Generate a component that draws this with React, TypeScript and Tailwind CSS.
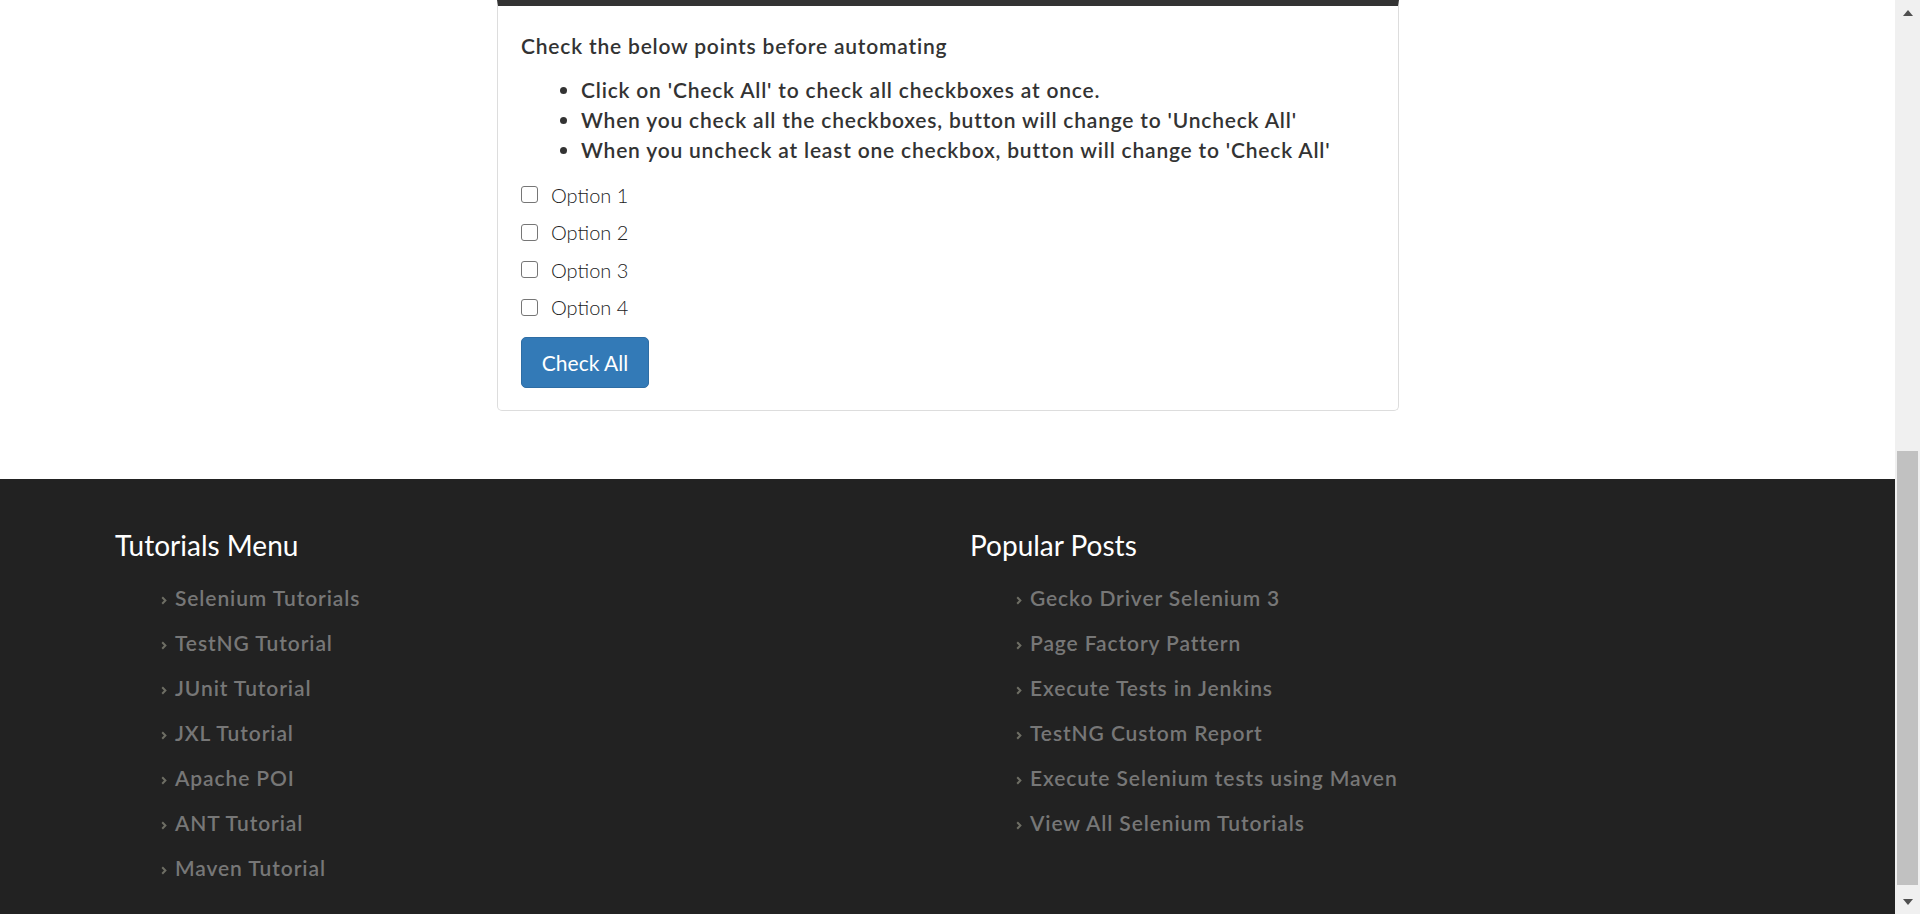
import React from "react";

const bullets = [
  "Click on 'Check All' to check all checkboxes at once.",
  "When you check all the checkboxes, button will change to 'Uncheck All'",
  "When you uncheck at least one checkbox, button will change to 'Check All'",
];

const tutorials = [
  "Selenium Tutorials",
  "TestNG Tutorial",
  "JUnit Tutorial",
  "JXL Tutorial",
  "Apache POI",
  "ANT Tutorial",
  "Maven Tutorial",
];

const posts = [
  "Gecko Driver Selenium 3",
  "Page Factory Pattern",
  "Execute Tests in Jenkins",
  "TestNG Custom Report",
  "Execute Selenium tests using Maven",
  "View All Selenium Tutorials",
];

function FooterCol({ title, items }: { title: string; items: string[] }) {
  return (
    <div>
      <h3 className="text-[28px] leading-[36px] font-normal text-white">{title}</h3>
      <ul className="mt-[12px] pl-[46px]">
        {items.map((t) => (
          <li key={t} className="flex items-center h-[45px]">
            <svg width="6" height="9" viewBox="0 0 6 9" className="mr-[8px] mt-[5px] shrink-0">
              <path d="M1.2 1.2 L4.4 4.5 L1.2 7.8" fill="none" stroke="#6e6e64" strokeWidth="2" />
            </svg>
            <span className="text-[#777] font-semibold text-[21px] tracking-[0.9px]">{t}</span>
          </li>
        ))}
      </ul>
    </div>
  );
}

export default function App() {
  return (
    <div
      className="flex h-[914px] w-[1920px] overflow-hidden bg-white"
      style={{ fontFamily: "Lato, 'Open Sans', sans-serif" }}
    >
      <div className="flex flex-col w-[1895px]">
        <div className="h-[479px] shrink-0">
          <div className="ml-[497px] w-[902px] border border-[#ddd] border-t-[6px] border-t-[#333] rounded-b-[5px] px-[23px] pt-[25px] pb-[22px]">
            <p className="text-[21px] leading-[30px] font-semibold tracking-[0.8px] text-[#333]">
              Check the below points before automating
            </p>
            <ul className="mt-[14px] pl-[60px] list-disc text-[21px] leading-[30px] font-semibold tracking-[0.8px] text-[#333]">
              {bullets.map((b) => (
                <li key={b}>{b}</li>
              ))}
            </ul>
            <div className="mt-[11px]">
              {[1, 2, 3, 4].map((n) => (
                <label key={n} className="flex items-center h-[37.5px]">
                  <span className="w-[17px] h-[17px] border-[1.5px] border-[#767676] rounded-[3px] bg-white" />
                  <span className="ml-[13px] text-[20px] font-light text-[#222]">Option {n}</span>
                </label>
              ))}
            </div>
            <button className="mt-[11px] w-[128px] h-[51px] rounded-[5px] bg-[#337ab7] border border-[#2e6da4] text-white text-[21px] font-normal">
              Check All
            </button>
          </div>
        </div>
        <footer className="flex-1 bg-[#222] pt-[48px] pl-[115px] grid grid-cols-[855px_1fr] content-start">
          <FooterCol title="Tutorials Menu" items={tutorials} />
          <FooterCol title="Popular Posts" items={posts} />
        </footer>
      </div>
      <div className="w-[25px] bg-[#f0f0f0] flex flex-col">
        <div className="h-[25px] flex items-center justify-center">
          <svg width="10" height="6" viewBox="0 0 10 6">
            <path d="M0 6 L5 0 L10 6 Z" fill="#505050" />
          </svg>
        </div>
        <div className="flex-1 flex flex-col justify-end pb-[4px]">
          <div className="h-[434px] mx-[2px] bg-[#c1c1c1]" />
        </div>
        <div className="h-[25px] flex items-center justify-center">
          <svg width="10" height="6" viewBox="0 0 10 6">
            <path d="M0 0 L10 0 L5 6 Z" fill="#505050" />
          </svg>
        </div>
      </div>
    </div>
  );
}
